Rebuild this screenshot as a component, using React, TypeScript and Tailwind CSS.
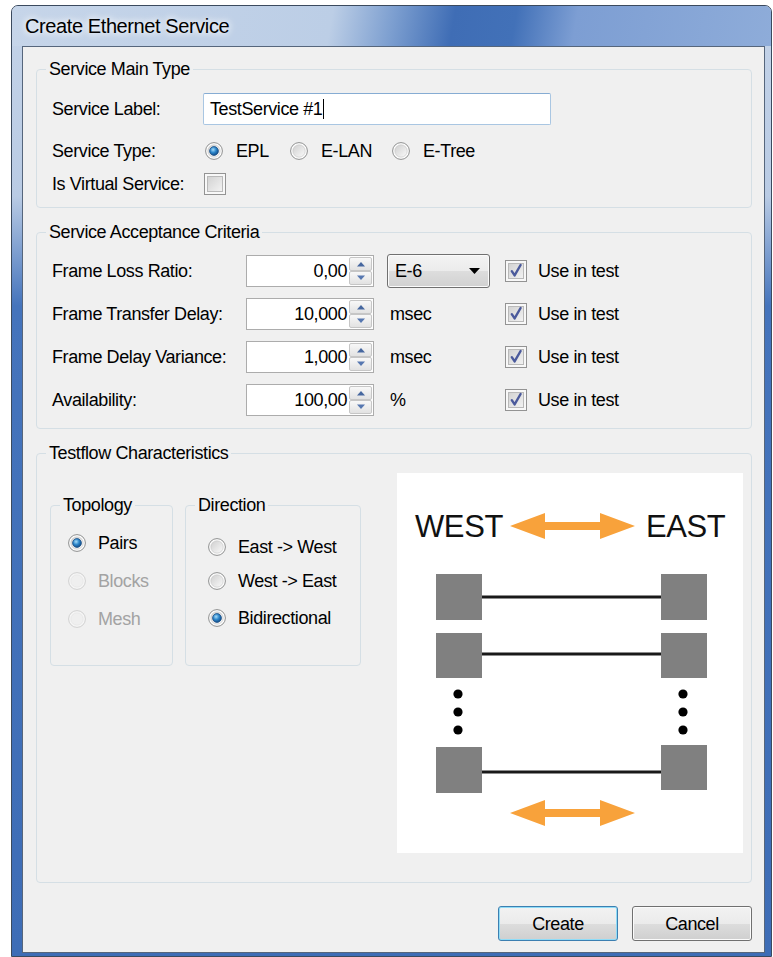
import React from 'react'

// Win7-style dialog font, tightened a little so labels keep their compact look
const ui = "font-['Liberation_Sans',Arial,sans-serif]"

function RadioMark({checked = false, disabled = false}: {checked?: boolean; disabled?: boolean}) {
  return (
    <svg width="18" height="18" viewBox="0 0 18 18" className="shrink-0">
      <defs>
        <linearGradient id="radioFace" x1="0" y1="0" x2="1" y2="1">
          <stop offset="0" stopColor="#cfcfcf"/>
          <stop offset="1" stopColor="#fafafa"/>
        </linearGradient>
        <radialGradient id="radioDot" cx="0.4" cy="0.35" r="0.75">
          <stop offset="0" stopColor="#a6dcf8"/>
          <stop offset="0.45" stopColor="#2c86cb"/>
          <stop offset="1" stopColor="#0b3c74"/>
        </radialGradient>
      </defs>
      <circle cx="9" cy="9" r="8.4" fill={disabled ? '#f6f6f6' : '#fdfdfd'} stroke={disabled ? '#d0d0d0' : '#8e8f8f'} strokeWidth="1"/>
      <circle cx="9" cy="9" r="6.2" fill={disabled ? '#efefef' : 'url(#radioFace)'} stroke={disabled ? '#e2e2e2' : '#c4c4c4'} strokeWidth="0.6"/>
      {checked && <circle cx="9" cy="9" r="4.4" fill="url(#radioDot)" stroke="#1a4f86" strokeWidth="0.8"/>}
    </svg>
  )
}

function CheckMark({checked = false}: {checked?: boolean}) {
  return (
    <svg width="22" height="22" viewBox="0 0 22 22" className="shrink-0">
      <defs>
        <linearGradient id="boxFace" x1="0" y1="0" x2="1" y2="1">
          <stop offset="0" stopColor="#d2d2d2"/>
          <stop offset="1" stopColor="#f3f3f3"/>
        </linearGradient>
      </defs>
      <rect x="0.5" y="0.5" width="21" height="21" fill="#f8f8f8" stroke="#939393"/>
      <rect x="3.5" y="3.5" width="15" height="15" fill="url(#boxFace)" stroke="#b9b9b9"/>
      {checked && (
        <path d="M6.8 11.2 L9.6 15.4 L15.6 5" fill="none" stroke="#4b5a9c" strokeWidth="2.4" strokeLinejoin="round" strokeLinecap="round"/>
      )}
    </svg>
  )
}

type GroupProps = {
  title: string
  className?: string
  children: React.ReactNode
}

function GroupBox({title, className = '', children}: GroupProps) {
  return (
    <fieldset className={`m-0 p-0 min-w-0 border border-[#d5dfe5] rounded-[4px] ${className}`}>
      <legend className="ml-[9px] px-[3px] leading-[22px] text-black whitespace-nowrap">{title}</legend>
      {children}
    </fieldset>
  )
}

function SpinBox({value}: {value: string}) {
  return (
    <div className="flex w-[128px] h-[32px] border border-[#acacac] bg-white">
      <div className="flex-1 flex items-center justify-end pr-[2px] text-black">{value}</div>
      <div className="w-[24px] flex flex-col py-[1px] pr-[1px]">
        {[0, 1].map(i => (
          <div
            key={i}
            className="flex-1 flex items-center justify-center rounded-[2px] border border-[#c6c6c6] bg-[linear-gradient(to_bottom,#f8f8f8,#e2e2e2)]"
          >
            <svg width="10" height="6" viewBox="0 0 10 6">
              <path d={i === 0 ? 'M1 5.5 L5 1 L9 5.5 Z' : 'M1 0.5 L5 5 L9 0.5 Z'} fill={i === 0 ? '#46679f' : '#5677b0'}/>
            </svg>
          </div>
        ))}
      </div>
    </div>
  )
}

function CriteriaRow({label, value, unit, first = false}: {label: string; value: string; unit: string; first?: boolean}) {
  return (
    <div className={`flex items-center h-[32px] ${first ? '' : 'mt-[11px]'}`}>
      <span className="w-[194px] whitespace-nowrap">{label}</span>
      <SpinBox value={value}/>
      <div className="ml-[13px] w-[103px]">
        {unit === 'combo' ? (
          <div className="h-[34px] flex items-center justify-between pl-[7px] pr-[9px] rounded-[3px] border border-[#707070] bg-[linear-gradient(to_bottom,#f3f3f3_0%,#ebebeb_50%,#dddddd_51%,#d1d1d1_100%)] shadow-[inset_0_0_0_1px_#fbfbfb]">
            <span>E-6</span>
            <svg width="11" height="6" viewBox="0 0 11 6">
              <path d="M0 0 L11 0 L5.5 6 Z" fill="#000"/>
            </svg>
          </div>
        ) : (
          <span className="pl-[3px]">{unit}</span>
        )}
      </div>
      <div className="ml-[15px] flex items-center">
        <CheckMark checked/>
        <span className="ml-[11px] whitespace-nowrap">Use in test</span>
      </div>
    </div>
  )
}

function FlowDiagram() {
  const arrow = (cy: number) =>
    `M113 ${cy} L148 ${cy - 13} L148 ${cy - 4} L203 ${cy - 4} L203 ${cy - 13} L238 ${cy} L203 ${cy + 13} L203 ${cy + 4} L148 ${cy + 4} L148 ${cy + 13} Z`

  // node pairs: [left y, left h, right y, right h, link y]
  const pairs = [
    [101, 46, 101, 46, 124],
    [160, 45, 160, 45, 181],
    [274, 46, 272, 45, 299],
  ]

  return (
    <svg width="346" height="380" viewBox="0 0 346 380" className="block">
      <text x="18" y="64" fontSize="31" fontFamily="'Liberation Sans', Arial, sans-serif" fill="#111">WEST</text>
      <text x="249" y="64" fontSize="31" fontFamily="'Liberation Sans', Arial, sans-serif" fill="#111">EAST</text>
      <path d={arrow(53)} fill="#f8a23b"/>
      {pairs.map(([ly, lh, ry, rh, cy], i) => (
        <g key={i}>
          <line x1="85" y1={cy} x2="264" y2={cy} stroke="#1a1a1a" strokeWidth="3"/>
          <rect x="39" y={ly} width="46" height={lh} fill="#808080"/>
          <rect x="264" y={ry} width="46" height={rh} fill="#808080"/>
        </g>
      ))}
      {[221, 239, 257].map(y => (
        <g key={y}>
          <circle cx="61" cy={y} r="4.6" fill="#000"/>
          <circle cx="286" cy={y} r="4.6" fill="#000"/>
        </g>
      ))}
      <path d={arrow(340)} fill="#f8a23b"/>
    </svg>
  )
}

export default function App() {
  return (
    <div className={`${ui} text-[18px] tracking-[-0.4px] leading-[24px] text-black`}>
      {/* window frame */}
      <div className="ml-[11px] mt-[5px] w-[761px] h-[952px] flex flex-col rounded-t-[7px] border border-[#3b4a5e] bg-[linear-gradient(to_bottom,#c4d3e8_0px,#b9cbe4_190px,#4574bc_300px,#3e6db6_100%)] overflow-hidden">
        {/* title bar */}
        <div className="h-[40px] shrink-0 flex items-center pl-[13px] bg-[linear-gradient(100deg,#c6d5e9_0%,#bccee6_42%,#7d9fd0_50%,#3f6db5_58%,#4271b8_66%,#7d9ed3_74%,#8eacd9_100%)]">
          <span className="text-[20px] leading-[26px] [text-shadow:0_0_6px_#ffffff,0_0_10px_#ffffff]">Create Ethernet Service</span>
        </div>

        {/* client area */}
        <div className="ml-[10px] w-[743px] h-[907px] shrink-0 border border-[#56667c] bg-[#f0f0f0] pl-[13px] pr-[12px] pt-[11px]">
          <GroupBox title="Service Main Type">
            <div className="pl-[15px] pt-[13px] pb-[11px]">
              <div className="flex items-center h-[32px]">
                <span className="w-[151px] whitespace-nowrap">Service Label:</span>
                <div className="w-[348px] h-[32px] flex items-center pl-[6px] rounded-[2px] border border-[#a9c6e2] border-t-[#86acd3] bg-white">
                  <span>TestService #1</span>
                  <span className="inline-block w-px h-[20px] bg-black ml-[1px]"/>
                </div>
              </div>
              <div className="mt-[10px] flex items-center h-[32px]">
                <span className="w-[151px] whitespace-nowrap">Service Type:</span>
                <div className="ml-[2px] w-[85px] flex items-center">
                  <RadioMark checked/>
                  <span className="ml-[13px]">EPL</span>
                </div>
                <div className="w-[102px] flex items-center">
                  <RadioMark/>
                  <span className="ml-[13px]">E-LAN</span>
                </div>
                <div className="flex items-center">
                  <RadioMark/>
                  <span className="ml-[13px]">E-Tree</span>
                </div>
              </div>
              <div className="mt-[5px] flex items-center h-[24px]">
                <span className="w-[152px] whitespace-nowrap">Is Virtual Service:</span>
                <CheckMark/>
              </div>
            </div>
          </GroupBox>

          <GroupBox title="Service Acceptance Criteria" className="mt-[13px]">
            <div className="pl-[15px] pt-[12px] pb-[12px]">
              <CriteriaRow first label="Frame Loss Ratio:" value="0,00" unit="combo"/>
              <CriteriaRow label="Frame Transfer Delay:" value="10,000" unit="msec"/>
              <CriteriaRow label="Frame Delay Variance:" value="1,000" unit="msec"/>
              <CriteriaRow label="Availability:" value="100,00" unit="%"/>
            </div>
          </GroupBox>

          <GroupBox title="Testflow Characteristics" className="mt-[13px]">
            <div className="flex items-start pl-[13px] pt-[9px] pb-[29px]">
              <GroupBox title="Topology" className="mt-[21px] w-[123px] h-[172px]">
                <div className="pl-[17px] pt-[15px]">
                  <div className="flex items-center h-[24px]">
                    <RadioMark checked/>
                    <span className="ml-[12px]">Pairs</span>
                  </div>
                  <div className="mt-[14px] flex items-center h-[24px] text-[#a3a3a3]">
                    <RadioMark disabled/>
                    <span className="ml-[12px]">Blocks</span>
                  </div>
                  <div className="mt-[14px] flex items-center h-[24px] text-[#a3a3a3]">
                    <RadioMark disabled/>
                    <span className="ml-[12px]">Mesh</span>
                  </div>
                </div>
              </GroupBox>

              <GroupBox title="Direction" className="ml-[12px] mt-[21px] w-[176px] h-[172px]">
                <div className="pl-[22px] pt-[19px]">
                  <div className="flex items-center h-[24px]">
                    <RadioMark/>
                    <span className="ml-[12px] whitespace-nowrap">East -&gt; West</span>
                  </div>
                  <div className="mt-[10px] flex items-center h-[24px]">
                    <RadioMark/>
                    <span className="ml-[12px] whitespace-nowrap">West -&gt; East</span>
                  </div>
                  <div className="mt-[13px] flex items-center h-[24px]">
                    <RadioMark checked/>
                    <span className="ml-[12px]">Bidirectional</span>
                  </div>
                </div>
              </GroupBox>

              <div className="ml-[36px] w-[346px] h-[380px] bg-white">
                <FlowDiagram/>
              </div>
            </div>
          </GroupBox>

          <div className="mt-[23px] flex justify-end gap-[14px]">
            <button className="w-[120px] h-[35px] rounded-[3px] border border-[#3c7fb1] bg-[linear-gradient(to_bottom,#f2f2f2_0%,#ebebeb_50%,#dddddd_51%,#cfcfcf_100%)] shadow-[inset_0_0_0_1px_#8fdcf7]">
              Create
            </button>
            <button className="w-[120px] h-[35px] rounded-[3px] border border-[#707070] bg-[linear-gradient(to_bottom,#f2f2f2_0%,#ebebeb_50%,#dddddd_51%,#cfcfcf_100%)] shadow-[inset_0_0_0_1px_#fbfbfb]">
              Cancel
            </button>
          </div>
        </div>
      </div>
    </div>
  )
}
